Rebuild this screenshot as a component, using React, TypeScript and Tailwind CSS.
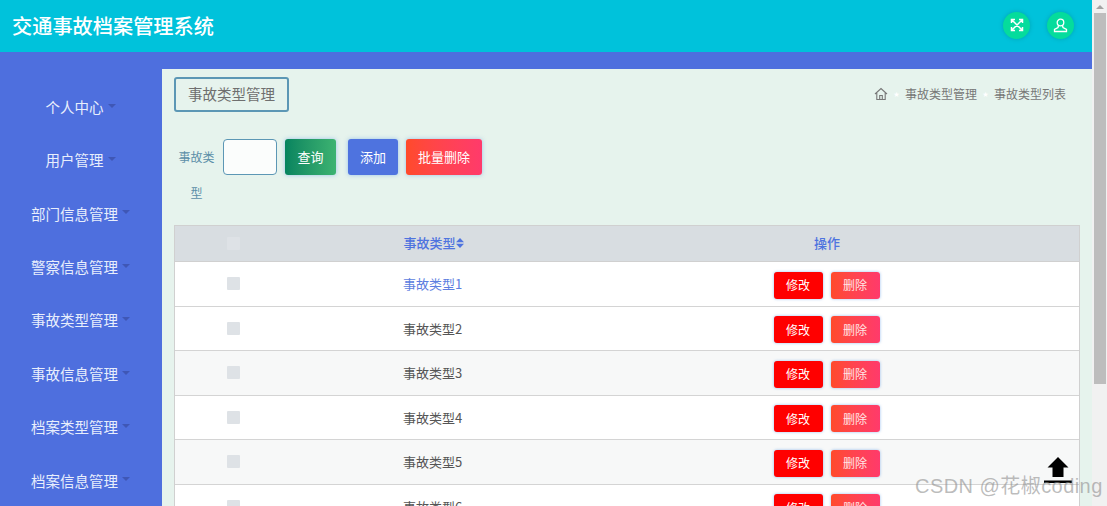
const menus = ["个人中心", "用户管理", "部门信息管理", "警察信息管理", "事故类型管理", "事故信息管理", "档案类型管理", "档案信息管理"];
const rows = [1, 2, 3, 4, 5, 6];

const App = () => {
  return (
    <div className="relative flex h-[506px] w-[1107px] overflow-hidden bg-white font-['Noto_Sans_CJK_SC','Noto_Sans',sans-serif]">
      <div className="flex h-full w-[1092px] shrink-0 flex-col">
        <header className="flex h-[52px] shrink-0 items-center justify-between bg-[#00c2db] pl-[12px] pr-[18px]">
          <h1 className="text-[20.2px] font-medium text-white">交通事故档案管理系统</h1>
          <div className="mb-[2px] flex gap-[17px]">
            <div className="flex h-[27px] w-[27px] items-center justify-center rounded-full bg-[#05dc9c] shadow-[0_0_4px_rgba(0,120,120,0.4)]">
              <svg width="14" height="14" viewBox="0 0 14 14" fill="none" stroke="white" strokeWidth="1.5">
                <path d="M1.5 5V1.5H5M9 1.5h3.5V5M12.5 9v3.5H9M5 12.5H1.5V9M2 2l10 10M12 2 2 12" />
              </svg>
            </div>
            <div className="flex h-[27px] w-[27px] items-center justify-center rounded-full bg-[#05dc9c] shadow-[0_0_4px_rgba(0,120,120,0.4)]">
              <svg width="15" height="15" viewBox="0 0 15 15" fill="none" stroke="white" strokeWidth="1.3">
                <circle cx="7.5" cy="4.5" r="3.3" />
                <path d="M5.5 7.5 5 9.5 1.5 11.5v2h12v-2L10 9.5l-.5-2" />
              </svg>
            </div>
          </div>
        </header>
        <div className="flex min-h-0 flex-1">
          <aside className="flex w-[162px] shrink-0 flex-col items-center bg-[#4e6fde] pr-[1px] pt-[28px]">
            {menus.map((m) => (
              <div key={m} className="flex h-[53.4px] shrink-0 items-center justify-center gap-[4px] text-[14.5px] text-[#e8eefc]">
                <span>{m}</span>
                <span className="mb-[2px] h-0 w-0 border-x-[4px] border-t-[4px] border-x-transparent border-t-[#3f57b5]" />
              </div>
            ))}
          </aside>
          <div className="flex min-w-0 flex-1 flex-col">
            <div className="h-[17px] shrink-0 bg-[#4e6fde]" />
            <main className="min-h-0 flex-1 overflow-hidden bg-[#e6f3ed] pl-[12px] pr-[12px] pt-[8px]">
              <div className="flex items-center justify-between pr-[14px]">
                <div className="flex h-[35px] w-[115px] items-center justify-center rounded-[3px] border-2 border-[#5c97b5] pb-[2px] text-[14.5px] text-[#6f6f6f]">
                  事故类型管理
                </div>
                <div className="flex items-center pb-[2px] text-[12px] text-[#777]">
                  <svg width="14" height="14" viewBox="0 0 14 14" fill="none" stroke="#777" strokeWidth="1.1">
                    <path d="M1 7 7 1.5 13 7M2.8 6v6.5h8.4V6M5.700 12.500V8.500h2.600v4" />
                  </svg>
                  <span className="mx-[5.5px] text-[6px] text-white">★</span>
                  <span>事故类型管理</span>
                  <span className="mx-[5.5px] text-[6px] text-white">★</span>
                  <span>事故类型列表</span>
                </div>
              </div>
              <div className="mt-[27px] flex items-start pl-[4px]">
                <div className="flex h-[36px] w-[37px] flex-wrap content-start justify-center text-[12px] leading-[36px] text-[#5c8fa8]">
                  <span className="whitespace-nowrap">事故类</span>
                  <span className="leading-[36px]">型</span>
                </div>
                <div className="ml-[8px] h-[36px] w-[54px] rounded-[4px] border border-[#5c97b5] bg-[#fbfdfc]" />
                <button className="ml-[8px] h-[36px] w-[51px] rounded-[3px] bg-gradient-to-r from-[#05845f] to-[#3cb371] text-[13px] text-white shadow-[0_0_4px_rgba(80,150,230,0.5)]">查询</button>
                <button className="ml-[12px] h-[36px] w-[50px] rounded-[3px] bg-[#4e73df] text-[13px] text-white shadow-[0_0_4px_rgba(80,150,230,0.5)]">添加</button>
                <button className="ml-[8px] h-[36px] w-[76px] rounded-[3px] bg-gradient-to-r from-[#ff4a2a] to-[#ff3a6b] text-[13px] text-white shadow-[0_0_4px_rgba(80,150,230,0.5)]">批量删除</button>
              </div>
              <div className="mt-[50px] w-[906px] border-x border-t border-[#d0d0d0] bg-white">
                <div className="flex h-[36px] items-center border-b border-[#d0d0d0] bg-[#d8dde1] pb-[1px] text-[13px] font-medium text-[#4e73df]">
                  <div className="flex w-[117px] justify-center">
                    <span className="h-[13px] w-[13px] rounded-[1px] bg-[#dee2e6]" />
                  </div>
                  <div className="flex w-[283px] items-center justify-center">
                    事故类型
                    <svg width="8" height="10" viewBox="0 0 8 10" fill="#4e73df"><path d="M4 0 8 4.300H0zM4 10 0 5.700h8z" /></svg>
                  </div>
                  <div className="flex-1 text-center">操作</div>
                </div>
                {rows.map((n) => (
                  <div key={n} className={`flex h-[44.5px] items-center border-b border-[#d4d4d4] text-[13px] ${n === 3 || n === 5 ? "bg-[#f7f8f8]" : "bg-white"}`}>
                    <div className="flex w-[117px] justify-center">
                      <span className="h-[13px] w-[13px] rounded-[1px] bg-[#dee2e6]" />
                    </div>
                    <div className={`w-[283px] pr-[2px] text-center ${n === 1 ? "text-[#5d7ee0]" : "text-[#555]"}`}>事故类型{n}</div>
                    <div className="mt-[3px] flex flex-1 justify-center gap-[8px] pr-[1px]">
                      <button className="h-[27px] w-[49px] rounded-[3px] bg-[#ff0000] text-[12px] text-white shadow-[0_0_3px_rgba(80,150,230,0.6)]">修改</button>
                      <button className="h-[27px] w-[49px] rounded-[3px] bg-gradient-to-r from-[#ff4a2a] to-[#ff3a6b] text-[12px] text-[#ffe6e6] shadow-[0_0_3px_rgba(80,150,230,0.6)]">删除</button>
                    </div>
                  </div>
                ))}
              </div>
            </main>
          </div>
        </div>
      </div>
      <div className="flex w-[15px] shrink-0 flex-col items-center bg-[#f1f1f1]">
        <span className="mt-[5px] h-0 w-0 border-x-[4px] border-b-[4px] border-x-transparent border-b-[#a3a3a3]" />
        <div className="mt-[4px] h-[371px] w-[12px] bg-[#bdbdbd]" />
      </div>
      <svg className="absolute left-[1044px] top-[456px]" width="28" height="28" viewBox="0 0 28 28" fill="black">
        <path d="M14 1 24.500 11.500H19.500V21H8.500V11.500H3.500z" />
        <rect x="0" y="24.500" width="28" height="2.500" />
      </svg>
      <div className="pointer-events-none absolute left-[915px] top-[472px] whitespace-nowrap font-['Liberation_Sans','Noto_Sans_CJK_SC',sans-serif] text-[20px] leading-[28px] tracking-[0.45px] text-[#8f8f8f]/60">
        CSDN @花椒coding
      </div>
    </div>
  );
};

export default App;
